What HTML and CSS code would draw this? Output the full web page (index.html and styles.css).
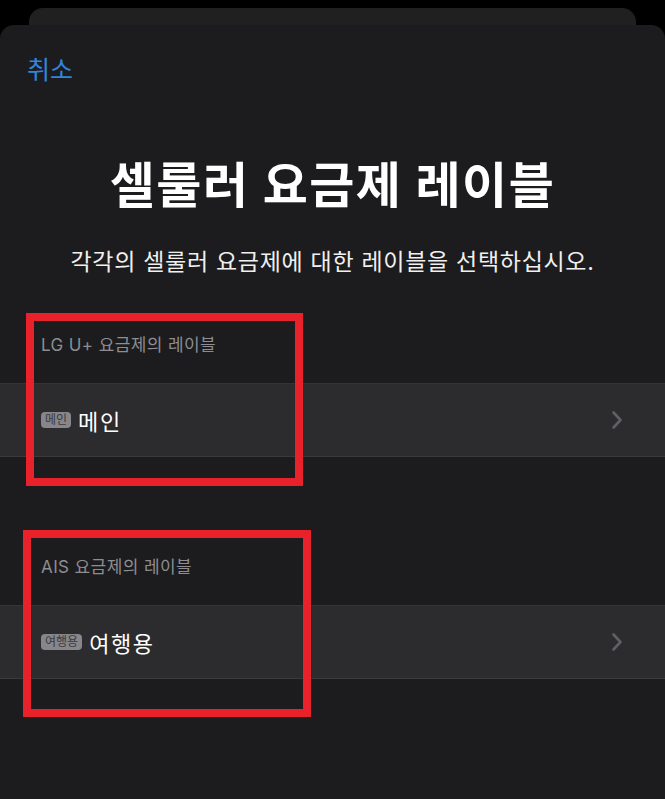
FILE: index.html
```html
<!DOCTYPE html>
<html>
<head>
	<meta charset="utf-8">
	<title>셀룰러 요금제 레이블</title>
	<link rel="stylesheet" href="styles.css">
</head>
<body>

	<div class="back-card"></div>

	<div class="sheet">

		<div class="sheet-nav">
			<a href="#" class="sheet-cancel">취소</a>
		</div>

		<h1 class="sheet-title">셀룰러 요금제 레이블</h1>
		<p class="sheet-desc">각각의 셀룰러 요금제에 대한 레이블을 선택하십시오.</p>

		<div class="group group-first">
			<div class="group-header">LG U+ 요금제의 레이블</div>
			<a href="#" class="cell">
				<span class="cell-badge">메인</span>
				<span class="cell-text">메인</span>
				<svg class="cell-chevron" width="12" height="20" viewBox="0 0 12 20">
					<path d="M2.5 2.5 L9.5 10 L2.5 17.5" fill="none" stroke="#5f5f64" stroke-width="2.6" stroke-linecap="round" stroke-linejoin="round"/>
				</svg>
			</a>
		</div>

		<div class="group group-second">
			<div class="group-header">AIS 요금제의 레이블</div>
			<a href="#" class="cell">
				<span class="cell-badge">여행용</span>
				<span class="cell-text">여행용</span>
				<svg class="cell-chevron" width="12" height="20" viewBox="0 0 12 20">
					<path d="M2.5 2.5 L9.5 10 L2.5 17.5" fill="none" stroke="#5f5f64" stroke-width="2.6" stroke-linecap="round" stroke-linejoin="round"/>
				</svg>
			</a>
		</div>

	</div>

	<!-- annotation boxes drawn over the screenshot -->
	<div class="mark mark-one"></div>
	<div class="mark mark-two"></div>

</body>
</html>
```

FILE: styles.css
```css
html, body {
	margin: 0px;
	padding: 0px;
	height: 100%;
}

body {
	background: #000;
	font-family: Inter, "Noto Sans CJK KR", sans-serif;
	color: #fff;
	overflow: hidden;
	position: relative;
}

a {
	text-decoration: none;
	color: inherit;
}

.back-card {
	height: 17px;
	margin: 8px 29px 0px 29px;
	background: #1f201f;
	border-radius: 14px 14px 0px 0px;
}

.sheet {
	background: #1c1c1e;
	border-radius: 14px 14px 0px 0px;
	padding-top: 27px;
	height: 774px;
	box-sizing: border-box;
}

.sheet-nav {
	height: 36px;
	line-height: 36px;
	padding-left: 27px;
}

.sheet-cancel {
	color: #2f86dc;
	font-size: 25px;
}

.sheet-title {
	margin: 68px 0px 0px 0px;
	height: 60px;
	line-height: 60px;
	font-size: 49px;
	font-weight: 700;
	text-align: center;
	letter-spacing: 1.5px;
}

.sheet-desc {
	margin: 31px 0px 0px 0px;
	height: 30px;
	line-height: 30px;
	font-size: 23px;
	text-align: center;
	letter-spacing: 0.7px;
	color: #f0f0f0;
}

.group-first {
	margin-top: 56px;
}

.group-second {
	margin-top: 98px;
}

.group-header {
	height: 24px;
	line-height: 24px;
	padding-left: 41px;
	margin-bottom: 26px;
	font-size: 17px;
	letter-spacing: 0.4px;
	color: #8d8d92;
}

.cell {
	display: flex;
	align-items: center;
	height: 72px;
	padding: 0px 42px 0px 41px;
	background: #2c2c2e;
	border-top: 1px solid #343436;
	border-bottom: 1px solid #3a3a3c;
}

.cell-badge {
	height: 16px;
	line-height: 16px;
	padding: 0px 4px;
	border-radius: 4px;
	background: #86868b;
	color: #3a3a3c;
	font-size: 12px;
	margin-right: 7px;
}

.cell-text {
	flex: 1;
	font-size: 22px;
	letter-spacing: 1.6px;
	color: #fff;
}

.cell-chevron {
	display: block;
}

.mark {
	position: absolute;
	border: 8px solid #e8212a;
	box-sizing: border-box;
}

.mark-one {
	left: 26px;
	top: 313px;
	width: 277px;
	height: 173px;
}

.mark-two {
	left: 23px;
	top: 530px;
	width: 288px;
	height: 187px;
}
```
